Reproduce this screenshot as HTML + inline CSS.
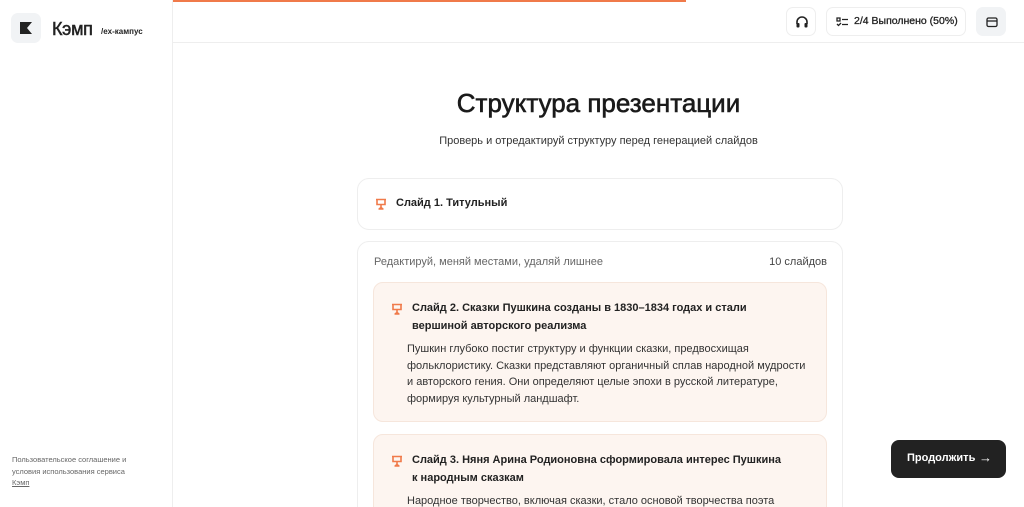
<!DOCTYPE html><html><head><meta charset="utf-8"><style>
*{box-sizing:border-box;margin:0;padding:0}
html,body{width:1024px;height:507px;overflow:hidden}
body{background:#fff;font-family:"Liberation Sans",sans-serif;color:#222;position:relative}
.side{position:absolute;left:0;top:0;width:173px;height:507px;border-right:1px solid #eee}
.logo{position:absolute;left:11px;top:13px;width:30px;height:30px;background:#f1f3f5;border-radius:7px}
.hdr{position:absolute;left:173px;right:0;top:0;height:43px;border-bottom:1px solid #eee}
.prog{position:absolute;left:173px;top:0;width:513px;height:2px;background:#f07a4a}
.btn{position:absolute;border:1px solid #eee;border-radius:7px;background:#fff}
.ic{width:14px;height:14px;display:inline-block;vertical-align:middle}
.card{position:absolute;left:357px;width:486px;border:1px solid #eee;border-radius:12px;background:#fff}
.slide{position:absolute;left:373px;width:454px;background:#fdf5f0;border:1px solid #f6e6dc;border-radius:10px}
.st{position:absolute;left:38px;font-size:11px;font-weight:bold;line-height:18px;color:#222}
.sb{position:absolute;left:33px;font-size:11px;line-height:16.5px;color:#333;width:400px}
.tro{position:absolute;left:17px}
</style></head><body>
<div class="side">
<div class="logo"><svg style="position:absolute;left:9px;top:9px" width="12" height="12" viewBox="0 0 12 12"><path d="M0 0H12L7 6L12 12H0Z" fill="#222"/></svg></div>
<div style="position:absolute;left:52px;top:19px;font-size:18px;-webkit-text-stroke:0.5px #222;letter-spacing:-0.3px">Кэмп</div>
<div style="position:absolute;left:101px;top:27px;font-size:8px;font-weight:bold">/ex-кампус</div>
<div style="position:absolute;left:12px;top:454px;font-size:7.5px;line-height:11.5px;color:#666">Пользовательское соглашение и<br>условия использования сервиса<br><u>Кэмп</u></div>
</div>
<div class="hdr"></div><div class="prog"></div>
<div class="btn" style="left:786px;top:7px;width:30px;height:29px"><svg class="ic" style="position:absolute;left:8px;top:7px" viewBox="0 0 14 14"><path d="M2 9V7a5 5 0 0 1 10 0v2" fill="none" stroke="#222" stroke-width="1.6"/><rect x="1.5" y="8" width="3" height="4.5" rx="1" fill="#222"/><rect x="9.5" y="8" width="3" height="4.5" rx="1" fill="#222"/></svg></div>
<div class="btn" style="left:826px;top:7px;width:140px;height:29px;font-size:10.5px;-webkit-text-stroke:0.3px #222;line-height:27px;padding-left:27px">2/4 Выполнено (50%)<svg class="ic" style="position:absolute;left:8px;top:7px" viewBox="0 0 14 14"><path d="M2 3h3v3H2zM7 4.5h6M7 9.5h6M2 9l1.5 1.5L6 8" fill="none" stroke="#222" stroke-width="1.3"/></svg></div>
<div class="btn" style="left:976px;top:7px;width:30px;height:29px;background:#f1f3f5;border-color:#f1f3f5"><svg class="ic" style="position:absolute;left:8px;top:7px" viewBox="0 0 14 14"><rect x="2" y="3" width="10" height="8.5" rx="1.5" fill="none" stroke="#222" stroke-width="1.3"/><path d="M2 6h10" stroke="#222" stroke-width="1.3"/></svg></div>
<div style="position:absolute;left:173px;width:851px;top:88px;text-align:center;font-size:26px;-webkit-text-stroke:0.6px #1a1a1a;color:#1a1a1a">Структура презентации</div>
<div style="position:absolute;left:173px;width:851px;top:135px;text-align:center;font-size:11px;color:#333">Проверь и отредактируй структуру перед генерацией слайдов</div>
<svg width="0" height="0" style="position:absolute"><defs><g id="t"><path d="M1 1.5h10M2 1.5v5h8v-5M6 6.5v3M3.5 11h5M6 9.5l-2 1.5M6 9.5l2 1.5" fill="none" stroke="#f07a4a" stroke-width="1.6"/></g></defs></svg>
<div class="card" style="top:178px;height:52px"><svg class="tro" style="top:19px" width="12" height="12"><use href="#t"/></svg><div style="position:absolute;left:38px;top:18px;font-size:11px;font-weight:bold">Слайд 1. Титульный</div></div>
<div class="card" style="top:241px;height:280px"><div style="position:absolute;left:16px;top:14px;font-size:11px;color:#666">Редактируй, меняй местами, удаляй лишнее</div><div style="position:absolute;right:15px;top:14px;font-size:11px;color:#444">10 слайдов</div></div>
<div class="slide" style="top:282px;height:140px"><svg class="tro" style="top:20px" width="12" height="12"><use href="#t"/></svg>
<div class="st" style="top:16px">Слайд 2. Сказки Пушкина созданы в 1830–1834 годах и стали<br>вершиной авторского реализма</div>
<div class="sb" style="top:58px">Пушкин глубоко постиг структуру и функции сказки, предвосхищая фольклористику. Сказки представляют органичный сплав народной мудрости и авторского гения. Они определяют целые эпохи в русской литературе, формируя культурный ландшафт.</div></div>
<div class="slide" style="top:434px;height:90px"><svg class="tro" style="top:20px" width="12" height="12"><use href="#t"/></svg>
<div class="st" style="top:16px">Слайд 3. Няня Арина Родионовна сформировала интерес Пушкина<br>к народным сказкам</div>
<div class="sb" style="top:58px">Народное творчество, включая сказки, стало основой творчества поэта</div></div>
<div style="position:absolute;left:891px;top:440px;width:115px;height:38px;background:#222;border-radius:8px;color:#fff;font-size:11px;font-weight:bold;line-height:37px;padding-left:16px">Продолжить<span style="position:absolute;right:14px;top:-1px;font-weight:normal;font-size:13px">→</span></div>
</body></html>
